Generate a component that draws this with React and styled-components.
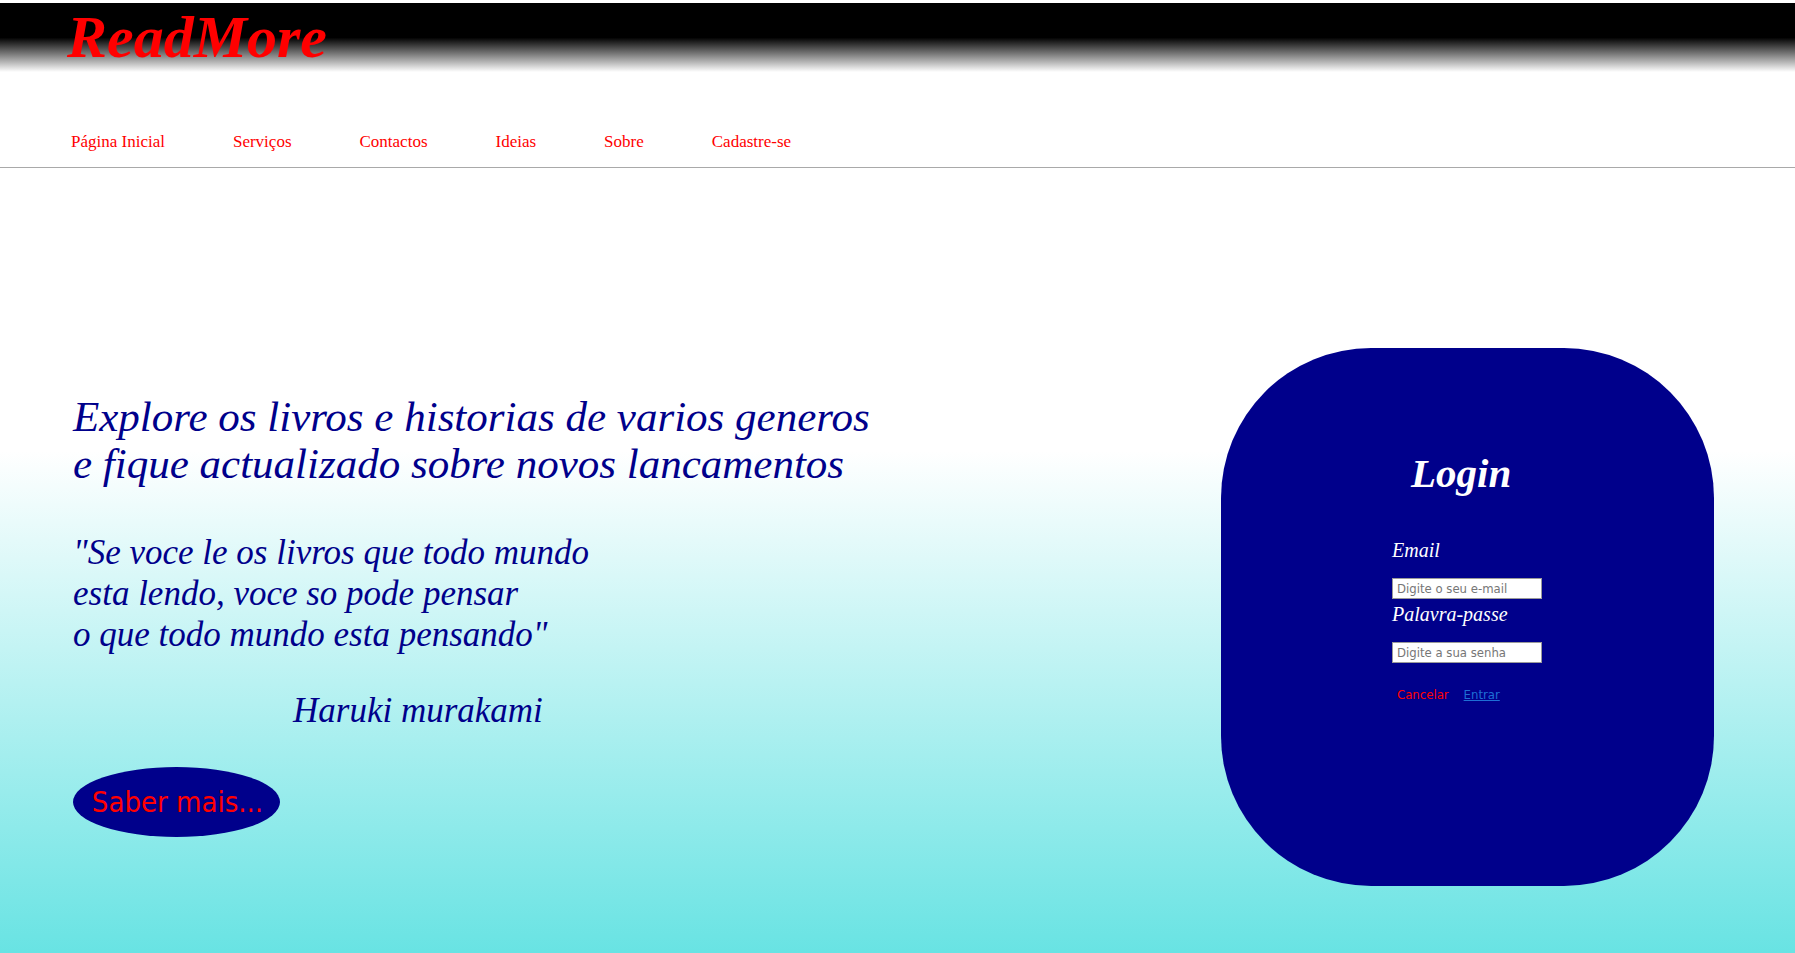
import React from "react";
import styled, { createGlobalStyle } from "styled-components";

const GlobalStyle = createGlobalStyle`
  html, body {
    margin: 0;
    padding: 0;
  }
  body {
    font-family: "Liberation Serif", "Times New Roman", serif;
    background: #fff;
  }
`;

const Page = styled.div`
  display: flex;
  flex-direction: column;
  min-height: 100vh;
`;

const Header = styled.header`
  margin-top: 3px;
  height: 69px;
  padding-left: 67px;
  background: linear-gradient(#000, #000, #fff);
`;

const Brand = styled.h1`
  margin: 0;
  font-size: 60px;
  line-height: 69px;
  font-style: italic;
  font-weight: bold;
  color: red;
`;

const Nav = styled.nav`
  padding: 60px 0 15px 71px;
  border-bottom: 1px solid #a9a9a9;
`;

const Menu = styled.ul`
  display: flex;
  gap: 68px;
  margin: 0;
  padding: 0;
  list-style: none;
`;

const MenuItem = styled.li`
  font-size: 17px;
  line-height: 20px;

  a {
    color: red;
    text-decoration: none;
  }
`;

const Main = styled.main`
  flex: 1;
  display: flex;
  justify-content: space-between;
  align-items: center;
  padding: 180px 81px 67px 73px;
  background: linear-gradient(#fff 0%, #fff 36%, #68e3e3 100%);
`;

const Intro = styled.section`
  display: flex;
  flex-direction: column;
  align-items: flex-start;
  margin-top: -4px;
  color: #00008b;
  font-style: italic;
`;

const Headline = styled.h2`
  margin: 0;
  font-size: 43px;
  line-height: 47px;
  font-weight: normal;
`;

const Quote = styled.p`
  margin: 45px 0 0;
  font-size: 35px;
  line-height: 41px;
`;

const Author = styled.p`
  margin: 35px 0 0;
  padding-left: 220px;
  font-size: 35px;
  line-height: 41px;
`;

const MoreButton = styled.button`
  margin-top: 36px;
  width: 207px;
  height: 70px;
  padding: 0 0 0 2px;
  border: none;
  border-radius: 50%;
  background: #00008b;
  color: red;
  font-family: "DejaVu Sans Condensed", "DejaVu Sans", Tahoma, sans-serif;
  font-stretch: condensed;
  font-size: 29px;
  cursor: pointer;
`;

const LoginCard = styled.div`
  width: 493px;
  height: 538px;
  box-sizing: border-box;
  padding: 102px 0 0 171px;
  border-radius: 150px;
  background: #00008b;
  color: #fff;
`;

const LoginTitle = styled.h2`
  margin: 0 0 0 19px;
  font-size: 41px;
  line-height: 46px;
  font-style: italic;
  font-weight: bold;
`;

const Form = styled.form`
  display: flex;
  flex-direction: column;
  align-items: flex-start;
  margin-top: 43px;
`;

const Label = styled.label`
  font-size: 20px;
  line-height: 23px;
  font-style: italic;
  margin-top: ${(p) => p.$gap || 0}px;
`;

const Field = styled.input`
  margin-top: 16px;
  width: 150px;
  height: 21px;
  box-sizing: border-box;
  padding: 1px 4px;
  border: 1px solid #9a9a9a;
  background: #fff;
  font-family: "DejaVu Sans Condensed", "DejaVu Sans", Tahoma, sans-serif;
  font-stretch: condensed;
  font-size: 13px;

  &::placeholder {
    color: #767676;
  }
`;

const Actions = styled.div`
  display: flex;
  align-items: baseline;
  gap: 15px;
  margin-top: 24px;
  padding-left: 5px;
  font-family: "DejaVu Sans Condensed", "DejaVu Sans", Tahoma, sans-serif;
  font-stretch: condensed;
  font-size: 13px;
  line-height: 15px;
`;

const CancelButton = styled.button`
  padding: 0;
  border: none;
  background: none;
  color: red;
  font: inherit;
  cursor: pointer;
`;

const EnterLink = styled.a`
  color: #1e6fd6;
  text-decoration: underline;
`;

export default function App() {
  const links = [
    "Página Inicial",
    "Serviços",
    "Contactos",
    "Ideias",
    "Sobre",
    "Cadastre-se",
  ];

  return (
    <Page>
      <GlobalStyle />
      <Header>
        <Brand>ReadMore</Brand>
      </Header>

      <Nav>
        <Menu>
          {links.map((l) => (
            <MenuItem key={l}>
              <a href="#">{l}</a>
            </MenuItem>
          ))}
        </Menu>
      </Nav>

      <Main>
        <Intro>
          <Headline>
            Explore os livros e historias de varios generos
            <br />
            e fique actualizado sobre novos lancamentos
          </Headline>
          <Quote>
            "Se voce le os livros que todo mundo
            <br />
            esta lendo, voce so pode pensar
            <br />
            o que todo mundo esta pensando"
          </Quote>
          <Author>Haruki murakami</Author>
          <MoreButton type="button">Saber mais...</MoreButton>
        </Intro>

        <LoginCard>
          <LoginTitle>Login</LoginTitle>
          <Form onSubmit={(e) => e.preventDefault()}>
            <Label htmlFor="email">Email</Label>
            <Field id="email" type="email" placeholder="Digite o seu e-mail" />
            <Label htmlFor="senha" $gap={4}>
              Palavra-passe
            </Label>
            <Field id="senha" type="password" placeholder="Digite a sua senha" />
            <Actions>
              <CancelButton type="reset">Cancelar</CancelButton>
              <EnterLink href="#">Entrar</EnterLink>
            </Actions>
          </Form>
        </LoginCard>
      </Main>
    </Page>
  );
}
